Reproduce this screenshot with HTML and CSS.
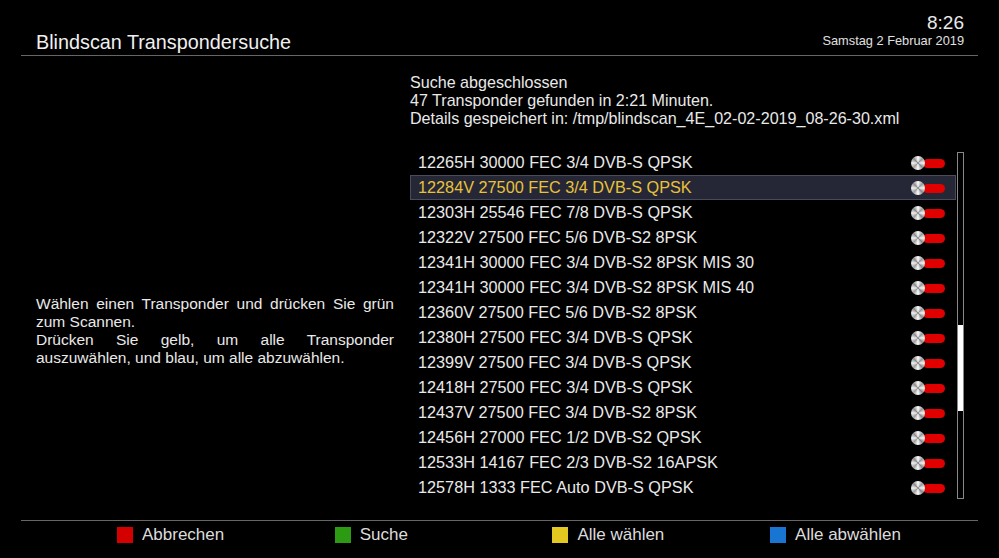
FILE: index.html
```html
<!DOCTYPE html>
<html lang="de">
<head>
    <meta charset="UTF-8">
    <title>Blindscan Transpondersuche</title>
    <link rel="stylesheet" href="styles.css">
</head>
<body>
    <div class="screen">
        <header class="top">
            <h1 class="title">Blindscan Transpondersuche</h1>
            <div class="clock">
                <div class="time">8:26</div>
                <div class="date">Samstag 2 Februar 2019</div>
            </div>
        </header>

        <div class="main">
            <div class="help">
                <p>Wählen einen Transponder und drücken Sie grün zum Scannen.<br>
                Drücken Sie gelb, um alle Transponder auszuwählen, und blau, um alle abzuwählen.</p>
            </div>

            <div class="results">
                <div class="info">
                    <div>Suche abgeschlossen</div>
                    <div>47 Transponder gefunden in 2:21 Minuten.</div>
                    <div>Details gespeichert in: /tmp/blindscan_4E_02-02-2019_08-26-30.xml</div>
                </div>

                <div class="list-wrap">
                    <ul class="list">
                        <li><span>12265H 30000 FEC 3/4 DVB-S QPSK</span><i class="toggle"></i></li>
                        <li class="selected"><span>12284V 27500 FEC 3/4 DVB-S QPSK</span><i class="toggle"></i></li>
                        <li><span>12303H 25546 FEC 7/8 DVB-S QPSK</span><i class="toggle"></i></li>
                        <li><span>12322V 27500 FEC 5/6 DVB-S2 8PSK</span><i class="toggle"></i></li>
                        <li><span>12341H 30000 FEC 3/4 DVB-S2 8PSK MIS 30</span><i class="toggle"></i></li>
                        <li><span>12341H 30000 FEC 3/4 DVB-S2 8PSK MIS 40</span><i class="toggle"></i></li>
                        <li><span>12360V 27500 FEC 5/6 DVB-S2 8PSK</span><i class="toggle"></i></li>
                        <li><span>12380H 27500 FEC 3/4 DVB-S QPSK</span><i class="toggle"></i></li>
                        <li><span>12399V 27500 FEC 3/4 DVB-S QPSK</span><i class="toggle"></i></li>
                        <li><span>12418H 27500 FEC 3/4 DVB-S QPSK</span><i class="toggle"></i></li>
                        <li><span>12437V 27500 FEC 3/4 DVB-S2 8PSK</span><i class="toggle"></i></li>
                        <li><span>12456H 27000 FEC 1/2 DVB-S2 QPSK</span><i class="toggle"></i></li>
                        <li><span>12533H 14167 FEC 2/3 DVB-S2 16APSK</span><i class="toggle"></i></li>
                        <li><span>12578H 1333 FEC Auto DVB-S QPSK</span><i class="toggle"></i></li>
                    </ul>
                    <div class="scrollbar"><div class="thumb"></div></div>
                </div>
            </div>
        </div>

        <footer class="keys">
            <div class="key"><b class="red"></b>Abbrechen</div>
            <div class="key"><b class="green"></b>Suche</div>
            <div class="key"><b class="yellow"></b>Alle wählen</div>
            <div class="key"><b class="blue"></b>Alle abwählen</div>
        </footer>
    </div>
</body>
</html>
```

FILE: styles.css
```css
body {
    margin: 0;
    background: #000;
    color: #e9e9e9;
    font-family: "Liberation Sans", Arial, sans-serif;
}

.screen {
    width: 957px;
    height: 558px;
    margin-left: 21px;
    display: flex;
    flex-direction: column;
}

/* header */
.top {
    height: 55px;
    border-bottom: 1px solid #666;
    display: flex;
    justify-content: space-between;
    align-items: flex-end;
    padding: 0 14px 0 15px;
}

.title {
    margin: 0 0 1px;
    font-size: 19.8px;
    font-weight: normal;
    line-height: 24px;
    color: #f0f0f0;
}

.clock {
    text-align: right;
    padding-bottom: 5px;
}

.time {
    font-size: 19px;
    line-height: 19px;
}

.date {
    font-size: 12.8px;
    line-height: 18px;
    color: #e0e0e0;
}

/* main area */
.main {
    flex: 1;
    display: flex;
}

.help {
    width: 358px;
    margin-left: 15px;
    padding-top: 239px;
}

.help p {
    margin: 0;
    font-size: 15.5px;
    line-height: 18px;
    text-align: justify;
}

.results {
    margin-left: 16px;
    width: 554px;
}

.info {
    padding-top: 17px;
    font-size: 16.1px;
    line-height: 18px;
}

.list-wrap {
    margin-top: 23px;
    display: flex;
}

.list {
    list-style: none;
    margin: 0;
    padding: 0;
    width: 547px;
}

.list li {
    height: 25px;
    box-sizing: border-box;
    display: flex;
    align-items: center;
    justify-content: space-between;
    padding: 0 11px 0 8px;
    font-size: 16.25px;
}

.list li.selected {
    background: #262736;
    border: 1px solid #4a4b5a;
    padding: 0 10px 0 7px;
    color: #e8c23a;
}

/* red switch with metal knob */
.toggle {
    position: relative;
    width: 34px;
    height: 14px;
}

.toggle::before {
    content: "";
    position: absolute;
    left: 12px;
    top: 3px;
    width: 22px;
    height: 9px;
    border-radius: 5px;
    background: #e00000;
}

.toggle::after {
    content: "";
    position: absolute;
    left: 0;
    top: 0;
    width: 14px;
    height: 14px;
    border-radius: 50%;
    background: conic-gradient(#fff, #9a9a9a, #f4f4f4, #8a8a8a, #fff, #a0a0a0, #f0f0f0, #8c8c8c, #fff);
}

.scrollbar {
    width: 5px;
    height: 345px;
    margin: 2px 0 0 1px;
    border: 1px solid #888;
    position: relative;
}

.thumb {
    position: absolute;
    left: 0;
    top: 172px;
    width: 5px;
    height: 86px;
    background: #fff;
}

/* colour keys */
.keys {
    height: 37px;
    border-top: 1px solid #666;
    display: grid;
    grid-template-columns: repeat(4, 217.7px);
    padding-left: 96px;
    align-items: start;
}

.key {
    display: flex;
    align-items: center;
    padding-top: 6px;
    font-size: 17px;
    line-height: 16px;
    color: #dcdcdc;
}

.key b {
    width: 16px;
    height: 16px;
    margin-right: 9px;
}

.red { background: #d40000; }
.green { background: #2d9a14; }
.yellow { background: #e3c91f; }
.blue { background: #1876d2; }
```
